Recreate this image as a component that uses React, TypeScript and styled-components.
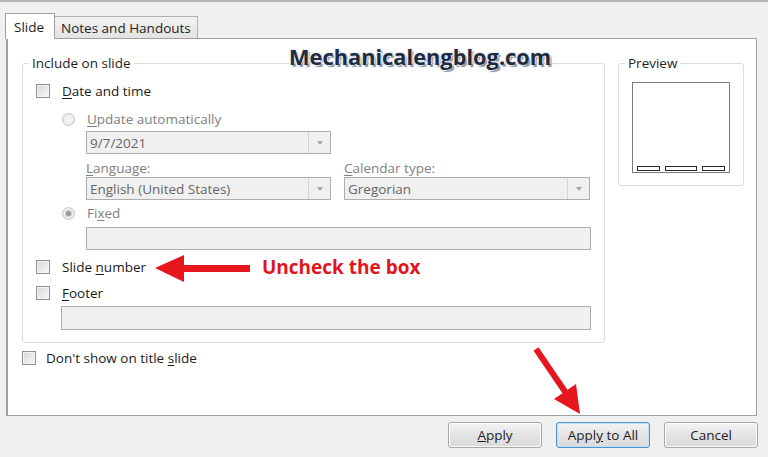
import React from "react";
import styled, { createGlobalStyle, css } from "styled-components";

const GlobalStyle = createGlobalStyle`
  html, body {
    margin: 0;
    padding: 0;
    background: #f0f0f0;
  }
  body {
    font-family: "Open Sans", "Noto Sans", sans-serif;
    font-size: 13.5px;
    color: #1e1e1e;
  }
`;

const Page = styled.div`
  position: relative;
  width: 768px;
  height: 457px;
  box-sizing: border-box;
  background: #f0f0f0;
  border-top: 2px solid #b4b4b4;
  overflow: hidden;
`;

const TabStrip = styled.div`
  display: flex;
  align-items: flex-end;
  height: 26px;
  margin-top: 10px;
  padding-left: 5px;
`;

const Tab = styled.div<{ $active?: boolean }>`
  display: flex;
  align-items: center;
  box-sizing: border-box;
  font-size: 13.5px;
  ${(p) =>
    p.$active
      ? css`
          position: relative;
          z-index: 2;
          height: 26px;
          width: 50px;
          padding-left: 8px;
          background: #fff;
          border: 1px solid #a0a0a0;
          border-bottom: none;
          margin-bottom: -1px;
        `
      : css`
          height: 22px;
          padding: 0 6px;
          background: linear-gradient(#f3f3f3, #e3e3e3);
          border: 1px solid #b0b0b0;
          border-left: none;
          border-bottom: none;
        `}
`;

const Panel = styled.div`
  position: relative;
  z-index: 1;
  box-sizing: border-box;
  width: 751px;
  height: 378px;
  margin-left: 6px;
  background: #fff;
  border: 1px solid #a0a0a0;
  border-left-width: 2px;
  padding: 15px 0 0 14px;
`;

const Columns = styled.div`
  display: flex;
  align-items: flex-start;
  gap: 13px;
`;

const Group = styled.fieldset<{ $width: number }>`
  box-sizing: border-box;
  width: ${(p) => p.$width}px;
  margin: 0;
  min-inline-size: 0;
  border: 1px solid #dcdcdc;
  border-radius: 3px;
  padding: 0 13px 12px 13px;
`;

const Legend = styled.legend`
  line-height: 18px;
  padding: 0 3px;
  margin-left: -7px;
  font-size: 13.5px;
  color: #1e1e1e;
`;

const Row = styled.div<{ $top?: number; $indent?: number; $h?: number; $gap?: number }>`
  display: flex;
  align-items: center;
  gap: ${(p) => p.$gap ?? 12}px;
  height: ${(p) => p.$h ?? 20}px;
  margin-top: ${(p) => p.$top ?? 0}px;
  margin-left: ${(p) => p.$indent ?? 0}px;
`;

const Label = styled.span<{ $disabled?: boolean }>`
  font-size: 13.5px;
  white-space: nowrap;
  color: ${(p) => (p.$disabled ? "#808080" : "#1a1a1a")};
  u {
    text-underline-offset: 2px;
  }
`;

const Check = styled.span`
  box-sizing: border-box;
  width: 14px;
  height: 14px;
  flex-shrink: 0;
  border: 1px solid #8e8f8f;
  background: linear-gradient(135deg, #d8d8d8, #f7f7f7);
  box-shadow: inset 0 0 0 1px #f4f4f4;
`;

const Radio = styled.span<{ $on?: boolean }>`
  position: relative;
  box-sizing: border-box;
  width: 13px;
  height: 13px;
  flex-shrink: 0;
  border-radius: 50%;
  border: 1px solid #c6c6c6;
  background: radial-gradient(circle, #f2f2f2 40%, #e2e2e2 100%);
  ${(p) =>
    p.$on &&
    css`
      &::after {
        content: "";
        position: absolute;
        inset: 3px;
        border-radius: 50%;
        background: #9a9a9a;
        box-shadow: 0 0 0 1px #cfcfcf;
      }
    `}
`;

const Select = styled.div<{ $w?: number; $h?: number; $top?: number; $indent?: number }>`
  display: flex;
  align-items: center;
  box-sizing: border-box;
  width: ${(p) => (p.$w ? `${p.$w}px` : "auto")};
  height: ${(p) => p.$h ?? 23}px;
  margin-top: ${(p) => p.$top ?? 0}px;
  margin-left: ${(p) => p.$indent ?? 0}px;
  border: 1px solid #adadad;
  background: #f0f0f0;
  color: #666;
  font-size: 13.5px;
  white-space: nowrap;
  padding-left: 3px;
`;

const DropArrow = styled.span`
  display: flex;
  align-items: center;
  justify-content: center;
  box-sizing: border-box;
  margin-left: auto;
  width: 22px;
  height: 100%;
  border-left: 1px solid #d4d4d4;
  &::after {
    content: "";
    border-left: 3.5px solid transparent;
    border-right: 3.5px solid transparent;
    border-top: 4px solid #a6a6a6;
  }
`;

const Pair = styled.div<{ $top?: number }>`
  display: flex;
  gap: 13px;
  margin-top: ${(p) => p.$top ?? 0}px;
  margin-left: 50px;
`;

const Column = styled.div<{ $w: number }>`
  display: flex;
  flex-direction: column;
  width: ${(p) => p.$w}px;
`;

const PreviewBox = styled.div`
  box-sizing: border-box;
  width: 98px;
  height: 91px;
  margin-top: 10px;
  border: 1px solid #7a7a7a;
  background: #fff;
  display: flex;
  align-items: flex-end;
  gap: 5px;
  padding: 0 0 1px 4px;
`;

const PreviewBar = styled.span<{ $w: number }>`
  box-sizing: border-box;
  width: ${(p) => p.$w}px;
  height: 5px;
  border: 1px solid #2a2a2a;
  background: #fff;
`;

const ButtonRow = styled.div`
  display: flex;
  justify-content: flex-end;
  gap: 14px;
  margin-top: 6px;
  padding-right: 10px;
`;

const Button = styled.button<{ $focus?: boolean }>`
  box-sizing: border-box;
  width: 94px;
  height: 26px;
  font-family: "Open Sans", "Noto Sans", sans-serif;
  font-size: 13.5px;
  color: #1e1e1e;
  border-radius: 3px;
  border: 1px solid ${(p) => (p.$focus ? "#4b94cc" : "#a8a8a8")};
  background: linear-gradient(#f4f4f4, #e4e4e4 50%, #dadada);
  box-shadow: ${(p) => (p.$focus ? "inset 0 0 0 1px #bfe0f5" : "inset 0 0 0 1px #fbfbfb")};
  padding: 0;
`;

const Watermark = styled.div`
  position: absolute;
  left: 289px;
  top: 40px;
  font-family: "Open Sans", sans-serif;
  font-weight: 700;
  font-size: 21.8px;
  color: #222b3e;
  text-shadow: -1px -1px 0 #e8eef4, 1px -1px 0 #e8eef4, -1px 1px 0 #e8eef4,
    2px 2px 1px #8a94a4;
  z-index: 3;
`;

const Callout = styled.div`
  position: absolute;
  left: 262px;
  top: 252px;
  font-family: "Open Sans", sans-serif;
  font-weight: 700;
  font-size: 19px;
  color: #e3151c;
  z-index: 3;
`;

const Overlay = styled.svg`
  position: absolute;
  left: 0;
  top: 0;
  z-index: 4;
  pointer-events: none;
`;

export default function App() {
  return (
    <>
      <GlobalStyle />
      <Page>
        <TabStrip>
          <Tab $active>Slide</Tab>
          <Tab>Notes and Handouts</Tab>
        </TabStrip>
        <Panel>
          <Columns>
            <Group $width={583}>
              <Legend>Include on slide</Legend>
              <Row $top={9}>
                <Check />
                <Label>
                  <u>D</u>ate and time
                </Label>
              </Row>
              <Row $top={9} $indent={26} $h={18}>
                <Radio />
                <Label $disabled>
                  <u>U</u>pdate automatically
                </Label>
              </Row>
              <Select $w={245} $top={3} $indent={50}>
                9/7/2021
                <DropArrow />
              </Select>
              <Pair $top={5}>
                <Column $w={245}>
                  <Row $h={18}>
                    <Label $disabled>
                      <u>L</u>anguage:
                    </Label>
                  </Row>
                  <Select $h={23}>
                    English (United States)
                    <DropArrow />
                  </Select>
                </Column>
                <Column $w={246}>
                  <Row $h={18}>
                    <Label $disabled>
                      <u>C</u>alendar type:
                    </Label>
                  </Row>
                  <Select $h={23}>
                    Gregorian
                    <DropArrow />
                  </Select>
                </Column>
              </Pair>
              <Row $top={4} $indent={26} $h={18}>
                <Radio $on />
                <Label $disabled>
                  Fi<u>x</u>ed
                </Label>
              </Row>
              <Select $top={5} $indent={50} />
              <Row $top={7}>
                <Check />
                <Label>
                  Slide <u>n</u>umber
                </Label>
              </Row>
              <Row $top={6}>
                <Check />
                <Label>
                  <u>F</u>ooter
                </Label>
              </Row>
              <Select $top={3} $indent={25} $h={24} />
            </Group>
            <Group $width={126}>
              <Legend>Preview</Legend>
              <PreviewBox>
                <PreviewBar $w={23} />
                <PreviewBar $w={32} />
                <PreviewBar $w={23} />
              </PreviewBox>
            </Group>
          </Columns>
          <Row $top={5} $gap={10}>
            <Check />
            <Label>
              Don't show on title <u>s</u>lide
            </Label>
          </Row>
        </Panel>
        <ButtonRow>
          <Button>
            <u>A</u>pply
          </Button>
          <Button $focus>
            Appl<u>y</u> to All
          </Button>
          <Button>Cancel</Button>
        </ButtonRow>
        <Watermark>Mechanicalengblog.com</Watermark>
        <Callout>Uncheck the box</Callout>
        <Overlay width={768} height={457} viewBox="0 0 768 457">
          <rect x={178} y={263} width={72} height={7} fill="#e5161d" />
          <polygon points="155,266 184,253 184,280" fill="#e5161d" />
          <line x1={536} y1={347} x2={566} y2={391} stroke="#e5161d" strokeWidth={6} />
          <polygon points="580,412 576,382 554,397" fill="#e5161d" />
        </Overlay>
      </Page>
    </>
  );
}
